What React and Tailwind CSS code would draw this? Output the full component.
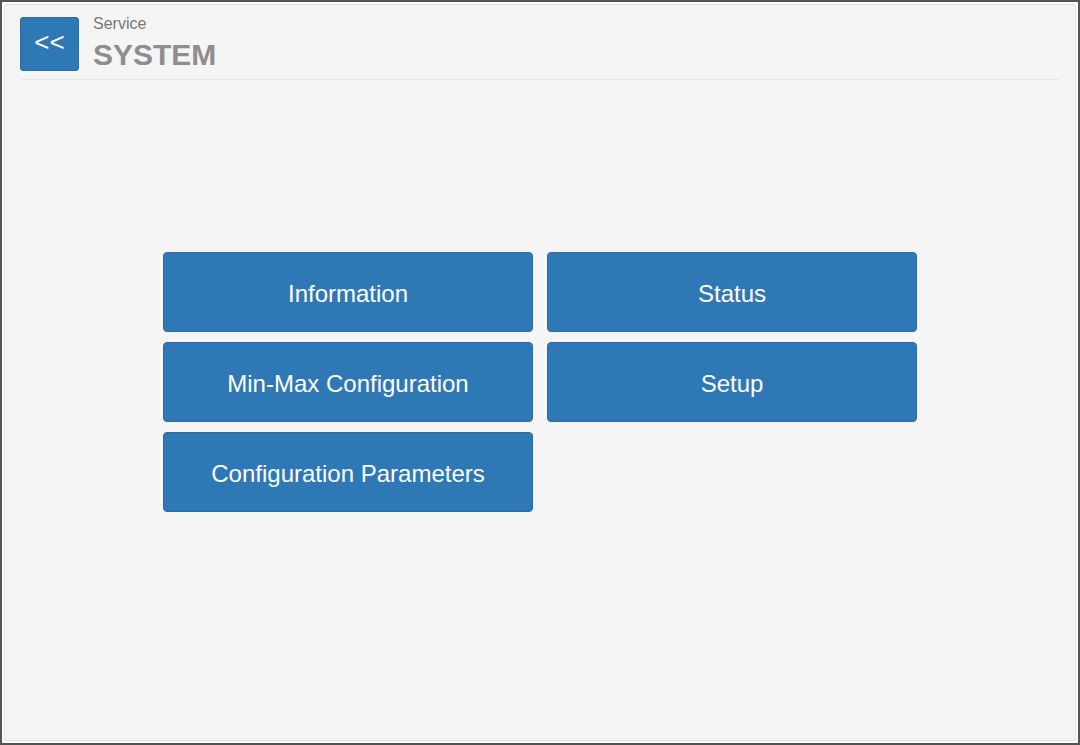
export default function App() {
  const items = ['Information', 'Status', 'Min-Max Configuration', 'Setup', 'Configuration Parameters'];

  return (
    <div className="h-[745px] w-[1080px] border-2 border-[#545454] bg-white p-[2px]" style={{ fontFamily: '"Liberation Sans", Arial, sans-serif' }}>
      <div className="flex h-full flex-col rounded-[3px] border border-[#e1e1e1] bg-[#f5f5f5] px-[15px] pt-[12px]">
        <div className="flex items-start gap-[14px] border-b border-[#e8e8e8] pb-[7px]">
          <button className="flex h-[54px] w-[59px] items-center justify-center rounded-[3px] border border-[#2e6da4] bg-[#2f78b6] pb-[3px] text-[26px] text-white">
            &lt;&lt;
          </button>
          <div className="-mt-[3px] flex flex-col">
            <span className="text-[16px] leading-[19px] text-[#777]">Service</span>
            <span className="mt-[4px] text-[30px] font-bold leading-[35px] text-[#8e8e8e]">SYSTEM</span>
          </div>
        </div>
        <div className="flex justify-center pt-[172px]">
          <div className="grid grid-cols-[370px_370px] gap-x-[14px] gap-y-[10px]">
            {items.map((label) => (
              <button key={label} className="h-[80px] rounded-[4px] border border-[#2e6da4] bg-[#2f78b6] pt-[3px] text-[24px] text-white">
                {label}
              </button>
            ))}
          </div>
        </div>
      </div>
    </div>
  );
}
